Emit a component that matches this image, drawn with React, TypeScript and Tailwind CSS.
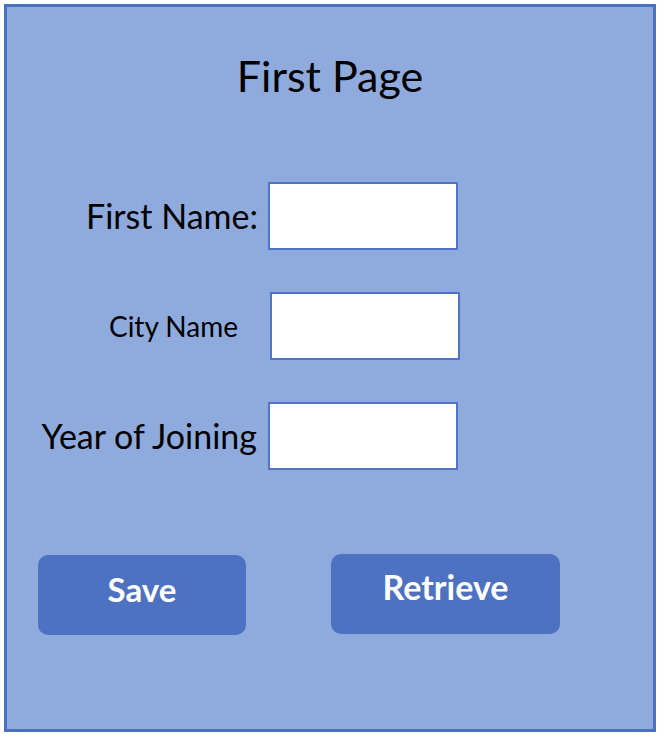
import React from 'react';

const font = { fontFamily: 'Lato, "Open Sans", sans-serif' };

export default function App() {
  return (
    <div className="w-[666px] h-[738px] bg-white pl-[4px] pt-[4px]" style={font}>
      <div className="w-[652px] h-[728px] bg-[#8faadc] border-[3px] border-[#4a70c2] flex flex-col">
        {/* Title */}
        <h1 className="mt-[43px] h-[52px] text-center text-[43px] leading-[52px] text-black">First Page</h1>

        {/* Fields */}
        <div className="mt-[80px] flex flex-col gap-[42px]">
          <div className="flex items-center h-[68px]">
            <div className="w-[251px] shrink-0 text-right text-[34px] leading-none">First Name:</div>
            <div className="ml-[10px] w-[190px] h-[68px] bg-white border-2 border-[#4f74c6]" />
          </div>
          <div className="flex items-center h-[68px]">
            <div className="w-[231px] shrink-0 text-right text-[28px] leading-none">City Name</div>
            <div className="ml-[32px] w-[190px] h-[68px] bg-white border-2 border-[#4f74c6]" />
          </div>
          <div className="flex items-center h-[68px]">
            <div className="w-[250px] shrink-0 text-right text-[34px] leading-none">Year of Joining</div>
            <div className="ml-[11px] w-[190px] h-[68px] bg-white border-2 border-[#4f74c6]" />
          </div>
        </div>

        {/* Buttons */}
        <div className="mt-[85px] flex items-start">
          <button className="ml-[31px] w-[208px] h-[80px] pb-[12px] rounded-[10px] bg-[#4d72c1] text-white font-bold text-[33px] leading-none">
            Save
          </button>
          <button className="ml-[85px] -mt-[1px] w-[229px] h-[80px] pb-[14px] rounded-[10px] bg-[#4d72c1] text-white font-bold text-[34px] leading-none">
            Retrieve
          </button>
        </div>
      </div>
    </div>
  );
}
